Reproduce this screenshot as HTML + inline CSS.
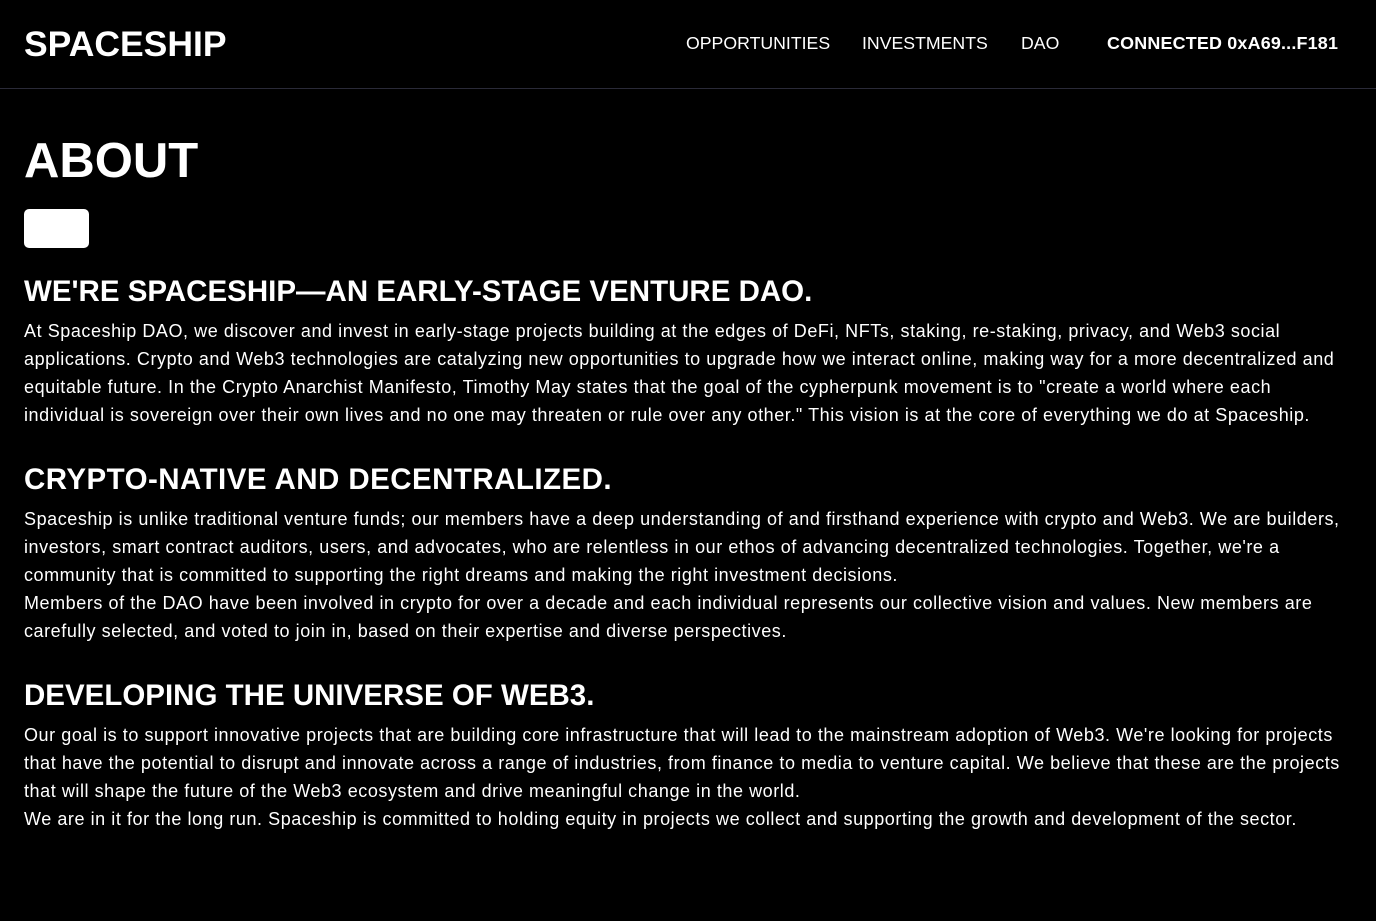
<!DOCTYPE html>
<html><head><meta charset="utf-8"><style>
html,body{margin:0;padding:0;background:#000;width:1376px;height:921px;overflow:hidden;color:#fff;font-family:"Liberation Sans",Arial,sans-serif}
.a{position:absolute;white-space:nowrap}
.hdr{position:absolute;left:0;top:0;width:1376px;height:88px;border-bottom:1px solid #2a2a38}
.nav{font-size:17.7px;line-height:24px;top:31px;letter-spacing:0}
.p{left:24px;font-size:18px;line-height:28px;height:28px;letter-spacing:0.56px}
.h{left:24px;font-size:29.5px;font-weight:bold;line-height:40px;letter-spacing:0}
</style></head><body>
<div class="hdr"></div>
<div class="a" style="left:24px;top:23px;font-size:35.5px;font-weight:bold;line-height:42px">SPACESHIP</div>
<div class="a nav" style="left:686px">OPPORTUNITIES</div>
<div class="a nav" style="left:862px">INVESTMENTS</div>
<div class="a nav" style="left:1021px">DAO</div>
<div class="a nav" style="left:1107px;font-weight:bold;font-size:17.9px;letter-spacing:0.2px">CONNECTED 0xA69...F181</div>

<div class="a" style="left:24px;top:131px;font-size:49px;font-weight:bold;line-height:60px">ABOUT</div>
<div class="a" style="left:24px;top:209px;width:65px;height:39px;background:#fff;border-radius:5px"></div>

<div class="a h" style="top:272px">WE'RE SPACESHIP—AN EARLY-STAGE VENTURE DAO.</div>
<div class="a p" style="top:317px">At Spaceship DAO, we discover and invest in early-stage projects building at the edges of DeFi, NFTs, staking, re-staking, privacy, and Web3 social</div>
<div class="a p" style="top:345px">applications. Crypto and Web3 technologies are catalyzing new opportunities to upgrade how we interact online, making way for a more decentralized and</div>
<div class="a p" style="top:373px">equitable future. In the Crypto Anarchist Manifesto, Timothy May states that the goal of the cypherpunk movement is to "create a world where each</div>
<div class="a p" style="top:401px">individual is sovereign over their own lives and no one may threaten or rule over any other." This vision is at the core of everything we do at Spaceship.</div>

<div class="a h" style="top:460px;letter-spacing:0.45px">CRYPTO-NATIVE AND DECENTRALIZED.</div>
<div class="a p" style="top:505px">Spaceship is unlike traditional venture funds; our members have a deep understanding of and firsthand experience with crypto and Web3. We are builders,</div>
<div class="a p" style="top:533px">investors, smart contract auditors, users, and advocates, who are relentless in our ethos of advancing decentralized technologies. Together, we're a</div>
<div class="a p" style="top:561px">community that is committed to supporting the right dreams and making the right investment decisions.</div>
<div class="a p" style="top:589px">Members of the DAO have been involved in crypto for over a decade and each individual represents our collective vision and values. New members are</div>
<div class="a p" style="top:617px">carefully selected, and voted to join in, based on their expertise and diverse perspectives.</div>

<div class="a h" style="top:676px">DEVELOPING THE UNIVERSE OF WEB3.</div>
<div class="a p" style="top:721px">Our goal is to support innovative projects that are building core infrastructure that will lead to the mainstream adoption of Web3. We're looking for projects</div>
<div class="a p" style="top:749px">that have the potential to disrupt and innovate across a range of industries, from finance to media to venture capital. We believe that these are the projects</div>
<div class="a p" style="top:777px">that will shape the future of the Web3 ecosystem and drive meaningful change in the world.</div>
<div class="a p" style="top:805px">We are in it for the long run. Spaceship is committed to holding equity in projects we collect and supporting the growth and development of the sector.</div>
</body></html>
